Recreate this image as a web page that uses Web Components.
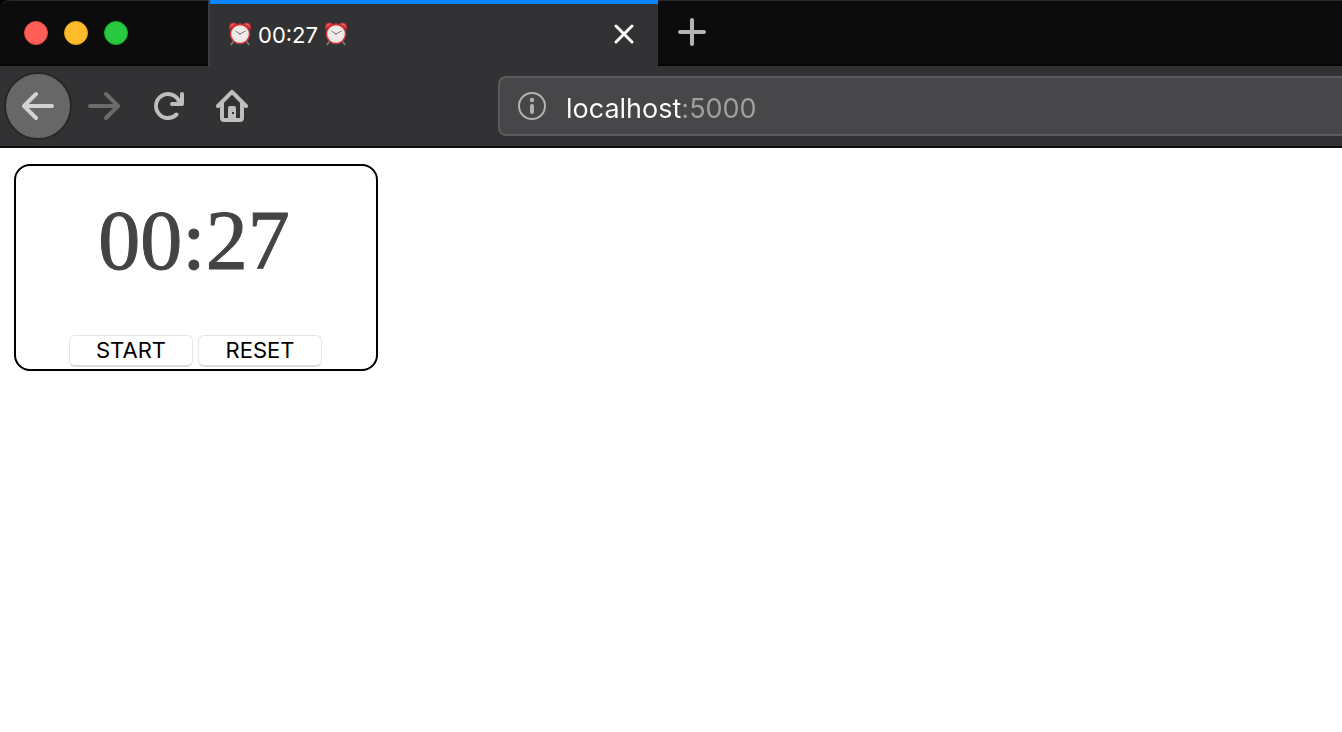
<!DOCTYPE html>
<html lang="en">
<head>
<meta charset="utf-8">
<meta name="viewport" content="width=device-width, initial-scale=1">
<title>⏰ 00:27 ⏰</title>
<style>
  body { margin: 0; background: #fff; font-family: Inter, "Liberation Sans", sans-serif; }
</style>
</head>
<body>
<browser-window>
  <window-controls slot="tabs"></window-controls>
  <browser-tab slot="tabs"><alarm-clock></alarm-clock><span>00:27</span><alarm-clock></alarm-clock></browser-tab>
  <new-tab-button slot="tabs"></new-tab-button>
  <nav-button slot="nav" icon="back" label="Back" round></nav-button>
  <nav-button slot="nav" icon="forward" label="Forward" dim></nav-button>
  <nav-button slot="nav" icon="reload" label="Reload"></nav-button>
  <nav-button slot="nav" icon="home" label="Home"></nav-button>
  <address-bar slot="nav" value="localhost:5000"></address-bar>
  <countdown-timer>00:27</countdown-timer>
</browser-window>

<script>
const define = (name, html, setup) => {
  const template = document.createElement('template');
  template.innerHTML = html;
  customElements.define(name, class extends HTMLElement {
    constructor() {
      super();
      this.attachShadow({ mode: 'open' }).append(template.content.cloneNode(true));
    }
    connectedCallback() {
      if (setup) setup(this, this.shadowRoot);
    }
  });
};

define('browser-window', `
  <style>
    :host { display: block; }
    .tabs { display: flex; box-sizing: border-box; height: 66px; background: #0c0c0d;
      border-top-left-radius: 10px; box-shadow: inset 0 1px #29292a, inset 0 -2px #050506; }
    header { background: #050506; }
    nav { display: flex; align-items: center; height: 80px; padding-left: 4px;
      background: #323234; border-bottom: 2px solid #0c0c0d; }
    main { padding: 16px 14px; }
  </style>
  <header>
    <div class="tabs"><slot name="tabs"></slot></div>
    <nav aria-label="Navigation"><slot name="nav"></slot></nav>
  </header>
  <main><slot></slot></main>`);

define('window-controls', `
  <style>
    :host { display: flex; flex: none; align-items: center; gap: 16px; box-sizing: border-box; width: 208px; padding-left: 24px; }
    button { width: 24px; height: 24px; padding: 0; border: 1px solid; border-radius: 50%; }
    .close { background: #ff5f57; border-color: #e2463f; }
    .min { background: #ffbd2e; border-color: #e1a116; }
    .max { background: #28c940; border-color: #12ac28; }
  </style>
  <button class="close" aria-label="Close window"></button>
  <button class="min" aria-label="Minimise window"></button>
  <button class="max" aria-label="Zoom window"></button>`);

define('alarm-clock', `
  <style>
    :host { display: block; flex: none; width: 24px; height: 24px; }
    svg { display: block; }
  </style>
  <svg width="24" height="24" viewBox="0 0 24 24" role="img" aria-label="Alarm clock">
    <path d="M5.500 19.500L3 22.500M18.500 19.500l2.500 3" stroke="#85858a" stroke-width="1.500" stroke-linecap="round"/>
    <path d="M1.500 7.500C0 4 2.200.8 5.500.8c1.800 0 3 .6 3.800 1.800z" fill="#dc3038"/>
    <path d="M22.500 7.500C24 4 21.800.8 18.500.8c-1.800 0-3 .6-3.800 1.800z" fill="#dc3038"/>
    <path d="M3 3.600Q4 2 6 2M21 3.600Q20 2 18 2" stroke="#f08a8a" fill="none"/>
    <path d="M10 1.200h4V4h-4z" fill="#8e3a3e"/>
    <circle cx="12" cy="12" r="10.300" fill="#cd353c"/>
    <circle cx="12" cy="12" r="8.800" fill="#efebe8"/>
    <circle cx="12" cy="12" r="7.200" fill="none" stroke="#d0c8c6" stroke-width="1" stroke-dasharray=".8 2.970"/>
    <path d="M7.500 9l4.500 3 5.500-3" fill="none" stroke="#777" stroke-width="1"/>
    <circle cx="12" cy="12" r=".8" fill="#777"/>
  </svg>`);

define('browser-tab', `
  <style>
    :host { display: flex; flex: 0 1 450px; align-items: center; box-sizing: border-box; height: 66px;
      border-left: 2px solid #3c3c3e; background: #323234; box-shadow: inset 0 4px #0a84ff;
      padding: 2px 22px 0 18px; color: #fff; font-size: 22px; line-height: 30px; }
    .title { display: flex; flex: 1; align-items: flex-start; gap: 6px; white-space: nowrap; }
    ::slotted(span) { padding-top: 1px; }
    ::slotted(alarm-clock) { margin-top: 3px; }
    button { display: block; padding: 0; border: 0; background: none; }
    svg { display: block; }
  </style>
  <div class="title"><slot></slot></div>
  <button aria-label="Close tab">
    <svg width="24" height="24" viewBox="0 0 24 24"><path d="M4 4l16 16M20 4L4 20" stroke="#fff" stroke-width="3" stroke-linecap="round"/></svg>
  </button>`);

define('new-tab-button', `
  <style>
    :host { display: flex; align-items: center; padding-left: 18px; }
    button { display: block; padding: 0 0 2px; border: 0; background: none; }
    svg { display: block; }
  </style>
  <button aria-label="New tab">
    <svg width="32" height="32" viewBox="0 0 32 32"><path d="M16 4v24M4 16h24" stroke="#b3b3b3" stroke-width="4" stroke-linecap="round"/></svg>
  </button>`);

const icons = {
  back: 'M15 7H3.414l4.293-4.293a1 1 0 0 0-1.414-1.414l-6 6a1 1 0 0 0 0 1.414l6 6a1 1 0 0 0 1.414-1.414L3.414 9H15a1 1 0 0 0 0-2z',
  forward: 'M1 7h11.586L8.293 2.707a1 1 0 0 1 1.414-1.414l6 6a1 1 0 0 1 0 1.414l-6 6a1 1 0 0 1-1.414-1.414L12.586 9H1a1 1 0 0 1 0-2z',
  reload: 'M15 1a1 1 0 0 0-1 1v2.418A6.995 6.995 0 1 0 8 15a6.954 6.954 0 0 0 4.950-2.050 1 1 0 0 0-1.414-1.414A5.019 5.019 0 1 1 12.549 6H10a1 1 0 0 0 0 2h5a1 1 0 0 0 1-1V2a1 1 0 0 0-1-1z',
  home: 'M8.707.293a1 1 0 0 0-1.414 0l-7 7a1 1 0 0 0 1.414 1.414L2 8.414V14a2 2 0 0 0 2 2h8a2 2 0 0 0 2-2V8.414l.293.293a1 1 0 0 0 1.414-1.414zM12 6.414V14h-2V9a1 1 0 0 0-1-1H7a1 1 0 0 0-1 1v5H4V6.414l4-4zM8 11h1v1H8z'
};

define('nav-button', `
  <style>
    :host { display: block; flex: none; color: #bebebf; }
    :host([dim]) { color: #6b6b6c; }
    :host([round]) { color: #d2d2d2; }
    button { display: flex; align-items: center; justify-content: center; box-sizing: border-box;
      width: 64px; height: 64px; padding: 0; border: 0; background: none; color: inherit; }
    :host([round]) button { width: 68px; height: 68px; border: 2px solid #272728; border-radius: 50%; background: #676767; }
  </style>
  <button><svg width="32" height="32" viewBox="0 0 16 16"><path fill="currentColor" fill-rule="evenodd"/></svg></button>`,
  (host, root) => {
    root.querySelector('path').setAttribute('d', icons[host.getAttribute('icon')]);
    root.querySelector('button').setAttribute('aria-label', host.getAttribute('label'));
  });

define('address-bar', `
  <style>
    :host { display: flex; flex: 1; align-items: center; gap: 18px; box-sizing: border-box; height: 60px;
      margin-left: 234px; padding-left: 16px; min-width: 0; background: #474749;
      border: 2px solid #5b5b5d; border-right: 0; border-radius: 8px 0 0 8px; }
    svg { display: block; flex: none; }
    input { flex: 1; min-width: 0; height: 44px; padding: 4px 0 0; border: 0; outline: 0; color: #fff;
      box-sizing: border-box; font: 27px/40px Inter, "Liberation Sans", sans-serif;
      background: linear-gradient(90deg, #fff var(--host-width, 116px), #a0a0a1 0);
      -webkit-background-clip: text; background-clip: text; -webkit-text-fill-color: transparent; }
  </style>
  <svg width="32" height="32" viewBox="0 0 32 32" aria-hidden="true">
    <circle cx="16" cy="16" r="13" fill="none" stroke="#b2b2b3" stroke-width="2"/>
    <circle cx="16" cy="10" r="2.200" fill="#b2b2b3"/>
    <path d="M16 16v6" stroke="#b2b2b3" stroke-width="4" stroke-linecap="round"/>
  </svg>
  <input type="text" aria-label="Address" spellcheck="false">`,
  (host, root) => {
    const input = root.querySelector('input');
    input.value = host.getAttribute('value');
    const pen = document.createElement('canvas').getContext('2d');
    pen.font = getComputedStyle(input).font;
    const hostName = input.value.split(':')[0];
    input.style.setProperty('--host-width', Math.round(pen.measureText(hostName).width) + 'px');
  });

define('countdown-timer', `
  <style>
    :host { display: block; box-sizing: border-box; max-width: 364px; padding: 27px 0 2px;
      border: 2px solid #000; border-radius: 16px; }
    .time { padding-right: 4px; text-align: center; color: #444; -webkit-text-stroke: 1px #444;
      font: 84px/96px "Liberation Serif", serif; }
    .actions { display: flex; justify-content: center; gap: 5px; margin-top: 46px; padding-right: 1px; }
    button { box-sizing: border-box; width: 124px; height: 32px; padding: 0 0 2px; color: #000; background: #fff;
      border: 1px solid #e6e6e6; border-bottom: 2px solid #dcdcdc; border-radius: 6px;
      font: 22px/26px Inter, "Liberation Sans", sans-serif; }
  </style>
  <div class="time" role="timer"><slot></slot></div>
  <div class="actions"><button type="button">START</button><button type="button">RESET</button></div>`);
</script>
</body>
</html>
